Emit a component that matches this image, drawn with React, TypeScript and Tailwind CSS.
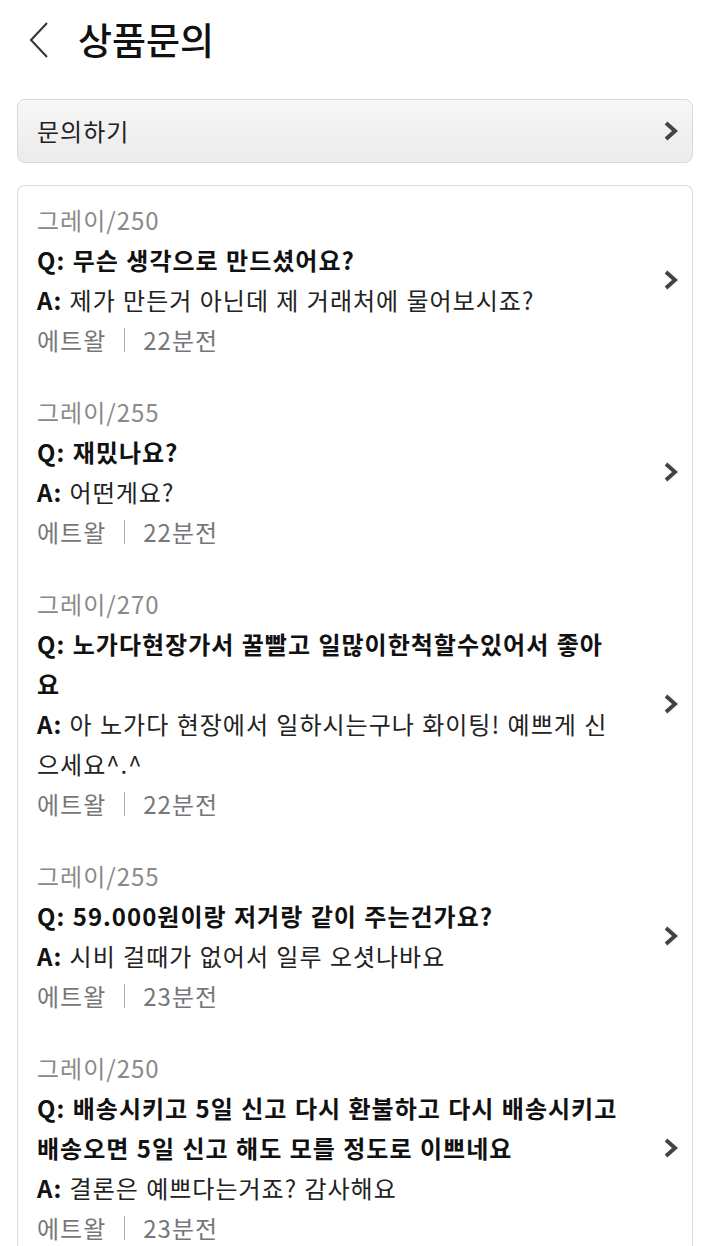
import React from 'react';

interface Inquiry {
    option: string;
    question: string;
    answer: string;
    author: string;
    time: string;
}

const inquiries: Inquiry[] = [
    {
        option: '그레이/250',
        question: '무슨 생각으로 만드셨어요?',
        answer: '제가 만든거 아닌데 제 거래처에 물어보시죠?',
        author: '에트왈',
        time: '22분전',
    },
    {
        option: '그레이/255',
        question: '재밌나요?',
        answer: '어떤게요?',
        author: '에트왈',
        time: '22분전',
    },
    {
        option: '그레이/270',
        question: '노가다현장가서 꿀빨고 일많이한척할수있어서 좋아요',
        answer: '아 노가다 현장에서 일하시는구나 화이팅! 예쁘게 신으세요^.^',
        author: '에트왈',
        time: '22분전',
    },
    {
        option: '그레이/255',
        question: '59.000원이랑 저거랑 같이 주는건가요?',
        answer: '시비 걸때가 없어서 일루 오셧나바요',
        author: '에트왈',
        time: '23분전',
    },
    {
        option: '그레이/250',
        question: '배송시키고 5일 신고 다시 환불하고 다시 배송시키고 배송오면 5일 신고 해도 모를 정도로 이쁘네요',
        answer: '결론은 예쁘다는거죠? 감사해요',
        author: '에트왈',
        time: '23분전',
    },
];

function Chevron() {
    return (
        <svg width="18" height="22" viewBox="0 0 18 22" className="shrink-0">
            <polyline points="4,3 13,11 4,19" fill="none" stroke="#444" strokeWidth="4" strokeLinejoin="miter" />
        </svg>
    );
}

function InquiryItem({ item }: { item: Inquiry }) {
    return (
        <div className="flex items-center pb-8">
            <div className="flex-1 pr-[40px] text-[24px] leading-[40px] tracking-[1px] [word-spacing:1px]">
                <div className="text-[#8a8a8a]">{item.option}</div>
                <div className="font-bold text-[#111]">Q: {item.question}</div>
                <div className="text-[#222]">
                    <span className="font-bold text-[#111]">A:</span> {item.answer}
                </div>
                <div className="flex items-center text-[#777]">
                    <span>{item.author}</span>
                    <span className="mx-[18px] h-[24px] w-px bg-[#aaa]" />
                    <span>{item.time}</span>
                </div>
            </div>
            <Chevron />
        </div>
    );
}

export default function App() {
    return (
        <div className="min-h-[1246px] bg-white font-['Noto_Sans_CJK_KR','Noto_Sans',sans-serif] text-[#222]">
            <header className="flex h-[80px] items-center px-[28px]">
                <svg width="22" height="38" viewBox="0 0 22 38" className="mr-[28px]">
                    <polyline points="19,2 3,19 19,36" fill="none" stroke="#333" strokeWidth="2" />
                </svg>
                <h1 className="text-[37px] font-medium text-[#111]">상품문의</h1>
            </header>

            <div className="px-[17px] pt-[19px]">
                <button className="flex h-[64px] w-full items-center justify-between rounded-lg border border-[#d9d9d9] bg-gradient-to-b from-[#f7f7f7] to-[#ebebeb] pl-[19px] pr-[12px] text-[24px] tracking-[1px] text-[#222]">
                    <span>문의하기</span>
                    <Chevron />
                </button>

                <div className="mt-[22px] rounded-t-lg border border-b-0 border-[#dcdcdc] pl-[19px] pr-[12px] pt-[14px]">
                    {inquiries.map((item, i) => (
                        <InquiryItem key={i} item={item} />
                    ))}
                </div>
            </div>
        </div>
    );
}
